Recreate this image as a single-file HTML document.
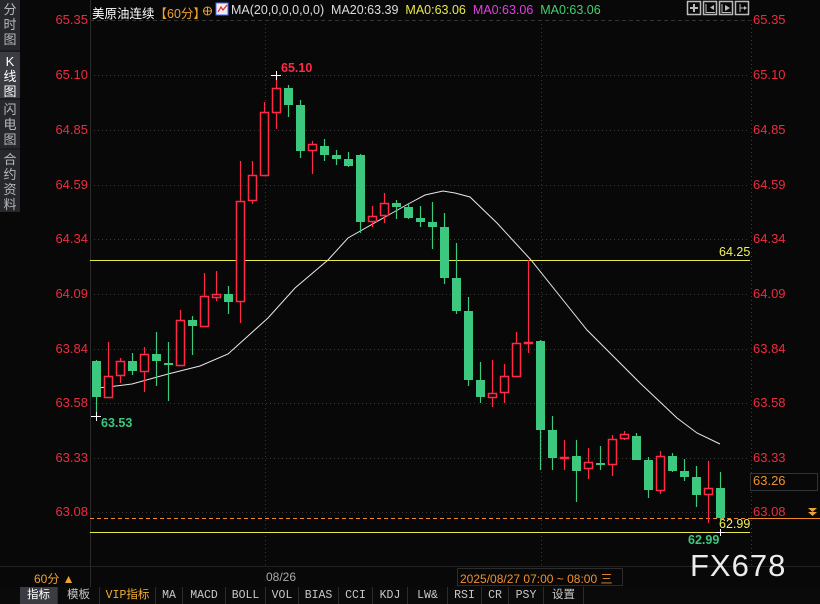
<!DOCTYPE html>
<html><head><meta charset="utf-8"><style>
*{margin:0;padding:0;box-sizing:border-box}
body{width:820px;height:604px;background:#080808;overflow:hidden;position:relative;font-family:"Liberation Sans","Noto Sans CJK SC",sans-serif}
.side{position:absolute;left:0;top:0;width:20px;height:212px;background:#1c1d20}
.side div{position:absolute;left:0;width:20px;background:#26282c;color:#b8b8b8;font-size:13px;line-height:15px;text-align:center;padding-top:2px}
.t{position:absolute;white-space:nowrap}
.tabs{position:absolute;left:0;top:587px;width:820px;height:17px;background:#0a0a0a}
.tabs span{position:absolute;top:0;height:17px;font-size:11.5px;line-height:17px;text-align:center;color:#c8c8c8;border-right:1px solid #2c2c2c;font-family:"Liberation Mono","Noto Sans CJK SC",monospace}
</style></head><body>
<div class="side">
<div style="top:0;height:50px">分<br>时<br>图</div>
<div style="top:52px;height:46px;background:#3a3c42;color:#fff">K<br>线<br>图</div>
<div style="top:100px;height:48px">闪<br>电<br>图</div>
<div style="top:150px;height:62px">合<br>约<br>资<br>料</div>
</div>
<svg width="820" height="604" style="position:absolute;left:0;top:0">
<g stroke="#3a3a3a" stroke-dasharray="1,3" stroke-width="1">
<line x1="90" y1="75.5" x2="750" y2="75.5"/><line x1="90" y1="130.5" x2="750" y2="130.5"/><line x1="90" y1="185.5" x2="750" y2="185.5"/><line x1="90" y1="239.5" x2="750" y2="239.5"/><line x1="90" y1="294.5" x2="750" y2="294.5"/><line x1="90" y1="349.5" x2="750" y2="349.5"/><line x1="90" y1="403.5" x2="750" y2="403.5"/><line x1="90" y1="458.5" x2="750" y2="458.5"/><line x1="90" y1="512.5" x2="750" y2="512.5"/>
<line x1="265.5" y1="20" x2="265.5" y2="566"/><line x1="541.5" y1="20" x2="541.5" y2="566"/><line x1="751.5" y1="20" x2="751.5" y2="566"/>
</g>
<line x1="90" y1="20.5" x2="750" y2="20.5" stroke="#333" stroke-dasharray="4,3"/>
<line x1="90.5" y1="0" x2="90.5" y2="587" stroke="#2a2a2a"/>
<line x1="90" y1="260.5" x2="750" y2="260.5" stroke="#e8e84a"/>
<line x1="90" y1="532.5" x2="750" y2="532.5" stroke="#e8e84a"/>
<line x1="90" y1="518.5" x2="750" y2="518.5" stroke="#f08a24" stroke-dasharray="4,3"/>
<line x1="750" y1="518.5" x2="820" y2="518.5" stroke="#f08a24"/>
<rect x="750.5" y="473.5" width="67" height="17" fill="#080808" stroke="#333"/>
<polyline fill="none" stroke="#e8e8e8" stroke-width="1" points="96,388 108,387 132,384 168,374 200,366 228,354 238,345 268,318 295,288 328,260 348,238 385,217 410,203 425,195 443,191 455,193 470,197 497,223 531,260 563,300 587,330 607,350 640,383 677,418 697,433 720,444"/>
<g id="c"></g>
<g stroke="#fff" stroke-width="1"><line x1="271" y1="75.5" x2="281" y2="75.5"/><line x1="276.5" y1="71" x2="276.5" y2="80"/><line x1="91" y1="416.5" x2="101" y2="416.5"/><line x1="96.5" y1="412" x2="96.5" y2="421"/><line x1="716" y1="532.5" x2="725" y2="532.5"/><line x1="720.5" y1="529" x2="720.5" y2="536"/></g>
<path d="M808 508h9l-4.5 4z M808 512h9l-4.5 4z" fill="#f0a030"/>
<g fill="none" stroke="#bbb" stroke-width="1.5"><rect x="687.5" y="1.5" width="13" height="13"/><rect x="703.5" y="1.5" width="13" height="13"/><rect x="719.5" y="1.5" width="13" height="13"/><rect x="735.5" y="1.5" width="13" height="13"/></g>
<path d="M693 4h2v3h3v2h-3v3h-2v-3h-3v-2h3z" fill="#bbb"/>
<g stroke="#bbb" stroke-width="1"><line x1="706" y1="4" x2="706" y2="13"/><line x1="706" y1="12.5" x2="715" y2="12.5"/><line x1="722" y1="4" x2="722" y2="13"/><line x1="722" y1="12.5" x2="731" y2="12.5"/><line x1="740" y1="4" x2="740" y2="12"/><line x1="740" y1="8" x2="746" y2="8"/></g>
<path d="M714 5v5l-4-2.5z M725 5v6l5-3z M744 6v4l3-2z" fill="#bbb"/>
<rect x="216" y="3" width="12" height="12" fill="#eee" stroke="#4466ff"/>
<polyline points="218,12 221,7 223,10 227,5" fill="none" stroke="#e22" stroke-width="1.2"/>
<circle cx="207.5" cy="11" r="4" fill="none" stroke="#e0a040"/><line x1="203" y1="11" x2="212" y2="11" stroke="#e0a040"/><line x1="207.5" y1="7" x2="207.5" y2="15" stroke="#e0a040"/>
<line x1="0" y1="566.5" x2="820" y2="566.5" stroke="#222"/>
<rect x="457.5" y="568.5" width="165" height="17" fill="none" stroke="#2c2c2c"/>
<line x1="90.5" y1="566" x2="90.5" y2="587" stroke="#2a2a2a"/>
</svg>
<script>
var d=[[96,360,416,361,397,0],[108,342,397,376,397,1],[120,358,383,361,375,1],[132,353,375,361,371,0],[144,347,392,354,371,1],[156,332,386,354,361,0],[168,342,401,363,365,0],[180,310,365,320,365,1],[192,316,355,320,326,0],[204,273,326,296,326,1],[216,271,301,294,297,1],[228,286,314,294,302,0],[240,161,323,201,301,1],[252,161,204,175,200,1],[264,102,175,112,175,1],[276,76,129,88,112,1],[288,85,117,88,105,0],[300,100,158,105,151,0],[312,141,174,144,150,1],[324,139,161,146,155,0],[336,150,165,155,159,0],[348,152,167,159,166,0],[360,154,233,155,222,0],[372,206,227,216,221,1],[384,193,223,203,215,1],[396,200,219,203,207,0],[408,204,219,207,218,0],[420,206,227,218,222,0],[432,202,249,222,227,0],[444,213,284,227,278,0],[456,243,314,278,311,0],[468,297,386,311,380,0],[480,362,403,380,397,0],[492,360,407,393,397,1],[504,364,403,376,392,1],[516,332,377,343,376,1],[528,260,353,342,343,1],[540,340,470,341,430,0],[552,416,470,430,458,0],[564,440,470,457,458,1],[576,440,502,456,471,0],[588,448,479,462,468,1],[600,446,470,463,465,0],[612,435,476,439,464,1],[624,431,440,434,438,1],[636,433,460,436,460,0],[648,457,498,460,490,0],[660,451,494,456,490,1],[672,453,472,456,471,0],[684,459,481,471,477,0],[696,466,507,477,495,0],[708,461,523,488,494,1],[720,472,520,488,518,0]];
var s='';d.forEach(function(a){var x=a[0]+0.5,col=a[5]?'#ff2a45':'#3cc87e';
if(a[5]){s+='<line x1="'+x+'" y1="'+a[1]+'" x2="'+x+'" y2="'+a[3]+'" stroke="'+col+'" stroke-width="1.2"/><line x1="'+x+'" y1="'+a[4]+'" x2="'+x+'" y2="'+a[2]+'" stroke="'+col+'" stroke-width="1.2"/>';
var h=Math.max(a[4]-a[3],1);s+='<rect x="'+(a[0]-3.5)+'" y="'+(a[3]+0.5)+'" width="8" height="'+h+'" fill="#080808" stroke="'+col+'" stroke-width="1.5"/>';}
else{s+='<line x1="'+x+'" y1="'+a[1]+'" x2="'+x+'" y2="'+a[2]+'" stroke="'+col+'" stroke-width="1.2"/>';
s+='<rect x="'+(a[0]-4)+'" y="'+a[3]+'" width="9" height="'+Math.max(a[4]-a[3],2)+'" fill="'+col+'"/>';}});
document.getElementById('c').innerHTML=s;
</script>
<div class="t" style="left:92px;top:3px;font-size:12.5px;color:#fff">美原油连续<span style="color:#f0a030">【60分】</span></div>
<div class="t" style="left:231px;top:3px;font-size:12.5px;color:#ddd">MA(20,0,0,0,0,0)&nbsp; MA20:63.39&nbsp; <span style="color:#e8e84a">MA0:63.06</span>&nbsp; <span style="color:#e040e0">MA0:63.06</span>&nbsp; <span style="color:#40d070">MA0:63.06</span></div>
<div style="position:absolute;left:20px;top:12px;width:68px;text-align:right;color:#ee2c40;font-size:13px;line-height:16px">
<div class="t" style="right:0;top:0">65.35</div><div class="t" style="right:0;top:55px">65.10</div><div class="t" style="right:0;top:110px">64.85</div><div class="t" style="right:0;top:165px">64.59</div><div class="t" style="right:0;top:219px">64.34</div><div class="t" style="right:0;top:274px">64.09</div><div class="t" style="right:0;top:329px">63.84</div><div class="t" style="right:0;top:383px">63.58</div><div class="t" style="right:0;top:438px">63.33</div><div class="t" style="right:0;top:492px">63.08</div></div>
<div style="position:absolute;left:753px;top:12px;color:#ee2c40;font-size:13px;line-height:16px">
<div class="t" style="top:0">65.35</div><div class="t" style="top:55px">65.10</div><div class="t" style="top:110px">64.85</div><div class="t" style="top:165px">64.59</div><div class="t" style="top:219px">64.34</div><div class="t" style="top:274px">64.09</div><div class="t" style="top:329px">63.84</div><div class="t" style="top:383px">63.58</div><div class="t" style="top:438px">63.33</div><div class="t" style="top:461px;color:#f09030">63.26</div><div class="t" style="top:492px">63.08</div></div>
<div class="t" style="left:281px;top:61px;color:#ff2a45;font-size:12.5px;font-weight:bold">65.10</div>
<div class="t" style="left:101px;top:416px;color:#3cc87e;font-size:12.5px;font-weight:bold">63.53</div>
<div class="t" style="left:719px;top:245px;color:#f0f060;font-size:12.5px">64.25</div>
<div class="t" style="left:719px;top:517px;color:#f0f060;font-size:12.5px">62.99</div>
<div class="t" style="left:688px;top:533px;color:#3cc87e;font-size:12.5px;font-weight:bold">62.99</div>
<div class="t" style="left:34px;top:570px;color:#f0a030;font-size:12px">60分 ▲</div>
<div class="t" style="left:266px;top:570px;color:#aaa;font-size:12px">08/26</div>
<div class="t" style="left:460px;top:570px;color:#f09030;font-size:12px">2025/08/27 07:00 ~ 08:00 三</div>
<div class="t" style="left:690px;top:548px;color:#ececec;font-size:31px;letter-spacing:1px">FX678</div>
<div class="tabs">
<span style="left:20px;width:38px;background:#3a3c42;color:#fff">指标</span><span style="left:58px;width:42px">模板</span><span style="left:100px;width:56px;color:#f0b030">VIP指标</span><span style="left:156px;width:27px">MA</span><span style="left:183px;width:43px">MACD</span><span style="left:226px;width:40px">BOLL</span><span style="left:266px;width:33px">VOL</span><span style="left:299px;width:40px">BIAS</span><span style="left:339px;width:34px">CCI</span><span style="left:373px;width:35px">KDJ</span><span style="left:408px;width:40px">LW&amp;</span><span style="left:448px;width:34px">RSI</span><span style="left:482px;width:27px">CR</span><span style="left:509px;width:35px">PSY</span><span style="left:544px;width:40px">设置</span>
</div>
</body></html>
